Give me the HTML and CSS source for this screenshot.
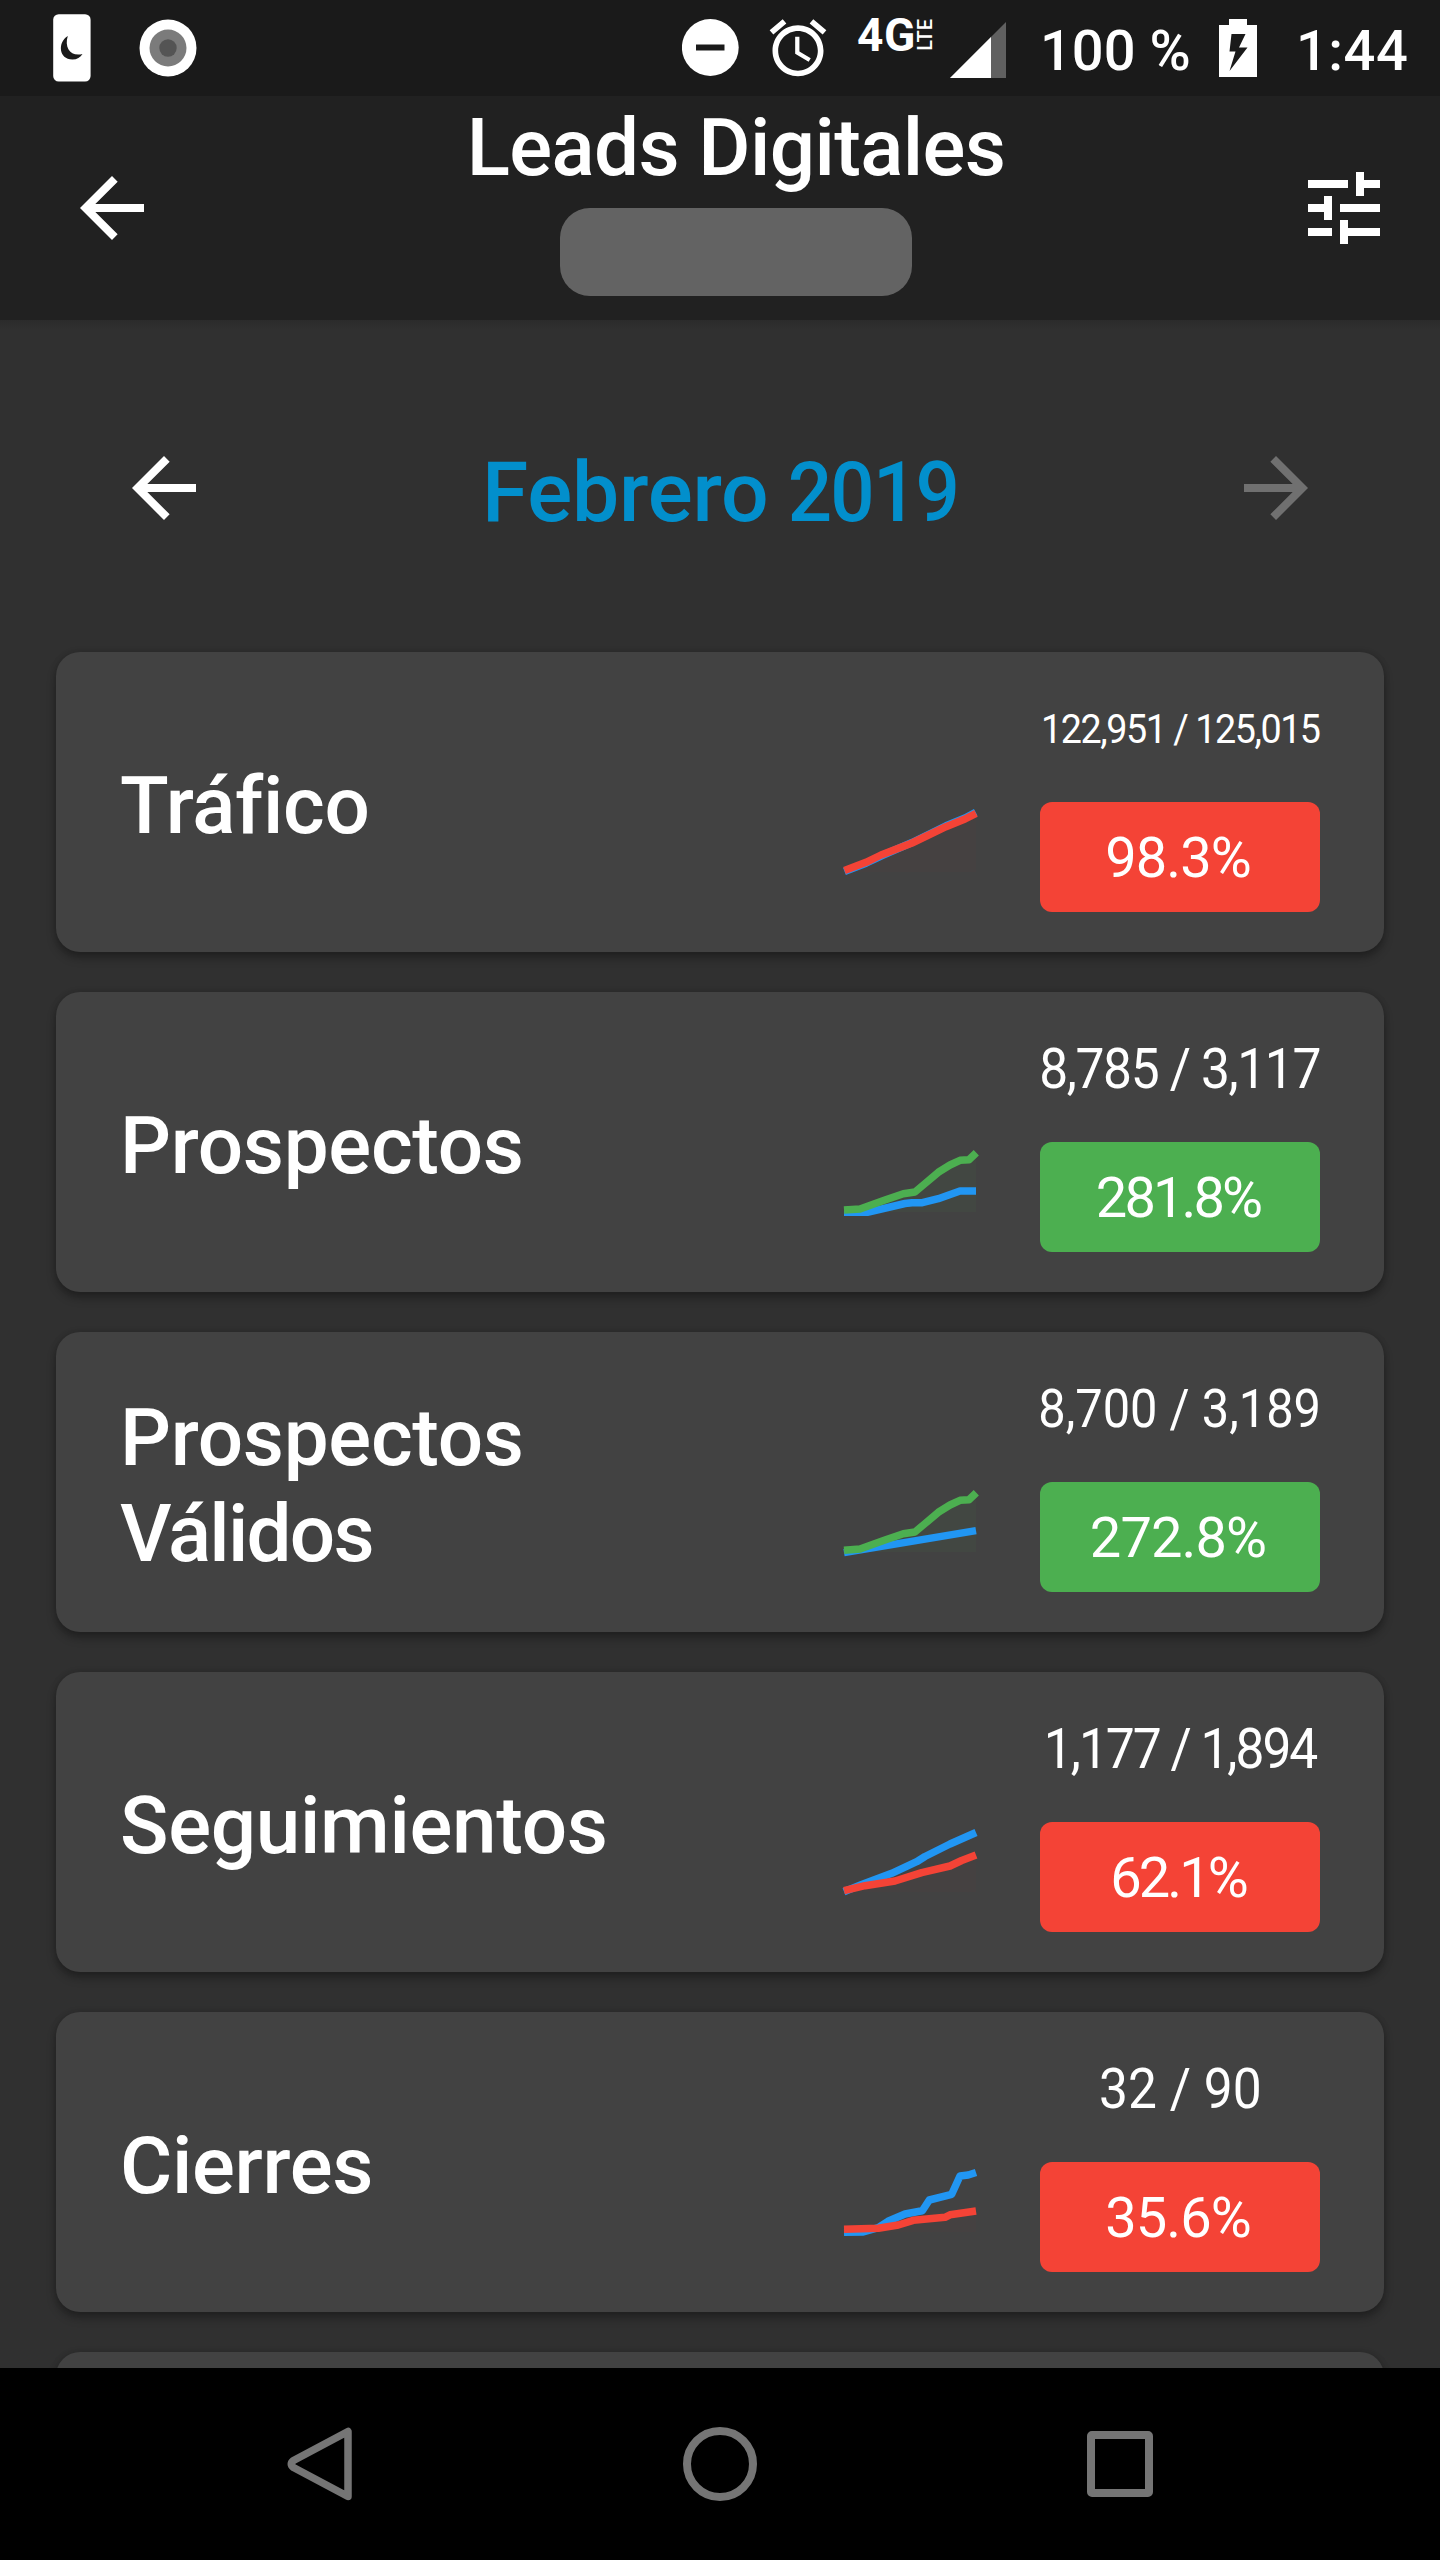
FILE: index.html
```html
<!DOCTYPE html>
<html lang="es">
<head>
<meta charset="utf-8">
<title>Leads Digitales</title>
<link rel="stylesheet" href="styles.css">
</head>
<body>
<div class="phone">
  <div class="status">
    <svg class="status-dim" width="38" height="68" viewBox="0 0 38 68"><rect x=".2" y=".2" width="37.4" height="67.4" rx="5.500" fill="#fff"/><path d="M14.800 22C4.500 28 5.500 45.500 19.500 45.500c4.500 0 8-2 10-5.500C18 43 11 34 14.800 22z" fill="#1a1a1a"/></svg>
    <svg class="status-dot" width="58" height="58" viewBox="0 0 58 58"><circle cx="29" cy="29" r="28.500" fill="#fff"/><circle cx="29" cy="29" r="18.500" fill="#7b7b7b"/><circle cx="29" cy="29" r="8.700" fill="#545454"/></svg>
    <div class="status-right">
      <svg width="57" height="57" viewBox="0 0 57 57"><circle cx="28.300" cy="28.500" r="28.400" fill="#fff"/><path d="M14 25.500h28.500v6H14z" fill="#1a1a1a"/></svg>
      <svg class="alarm" width="68" height="68" viewBox="0 0 24 24"><path fill="#fff" d="M22 5.720l-4.600-3.860-1.290 1.530 4.600 3.860L22 5.720zM7.880 3.390L6.600 1.860 2 5.710l1.290 1.530 4.590-3.850zM12.500 8H11v6l4.750 2.850.75-1.230-4-2.370V8zM12 4c-4.970 0-9 4.030-9 9s4.020 9 9 9c4.970 0 9-4.030 9-9s-4.030-9-9-9zm0 16c-3.870 0-7-3.130-7-7s3.130-7 7-7 7 3.130 7 7-3.130 7-7 7z"/></svg>
      <div class="network"><span class="network-gen">4G</span><span class="network-lte">LTE</span></div>
      <svg class="signal" width="56" height="56" viewBox="0 0 56 56"><path d="M0 56L56 0V56z" fill="#606060"/><path d="M0 56L41 15V56z" fill="#fff"/></svg>
      <span class="status-text percent">100 %</span>
      <svg class="battery" width="38" height="58" viewBox="0 0 38 58"><path d="M10 0h18v6h10v52H0V6h10z" fill="#fff"/><path d="M12.500 15H26.500L20 28.500h8.500L10.500 52 16.500 32.500H10.500z" fill="#1a1a1a"/></svg>
      <span class="status-text clock">1:44</span>
    </div>
  </div>

  <header class="appbar">
    <svg class="icon" viewBox="0 0 24 24"><path fill="#fff" d="M20 11H7.830l5.590-5.590L12 4l-8 8 8 8 1.410-1.410L7.830 13H20v-2z"/></svg>
    <div class="appbar-center">
      <h1 class="appbar-title">Leads Digitales</h1>
      <div class="pill"></div>
    </div>
    <svg class="icon" viewBox="0 0 24 24"><path fill="#fff" d="M3 17v2h6v-2H3zM3 5v2h10V5H3zm10 16v-2h8v-2h-8v-2h-2v6h2zM7 9v2H3v2h4v2h2V9H7zm14 4v-2H11v2h10zm-6-4h2V7h4V5h-4V3h-2v6z"/></svg>
  </header>

  <main class="content">
    <div class="month">
      <svg class="icon" viewBox="0 0 24 24"><path fill="#fff" d="M20 11H7.830l5.590-5.590L12 4l-8 8 8 8 1.410-1.410L7.830 13H20v-2z"/></svg>
      <h2 class="month-label">Febrero <span class="year">2019</span></h2>
      <svg class="icon" viewBox="0 0 24 24"><path fill="#707070" d="M12 4l-1.410 1.410L16.170 11H4v2h12.170l-5.580 5.590L12 20l8-8z"/></svg>
    </div>

    <section class="card">
      <h3 class="card-title">Tráfico</h3>
      <svg class="spark" viewBox="0 0 160 100"><path class="area-red" d="M14 80L36 71 51 63 82 51 116 35 146 21V80z"/><path class="line blue" d="M14.500 79.600L36 71.200 51 64 82 50.500 116 33.800 135 26 145.700 20.300"/><path class="line red" d="M14.500 78.600L36 70.300 51 63 82 51 116 34.700 135 27 146 21.300"/></svg>
      <div class="values"><span class="ratio ratio-small">122,951 / 125,015</span><span class="badge bad">98.3%</span></div>
    </section>

    <section class="card">
      <h3 class="card-title">Prospectos</h3>
      <svg class="spark" viewBox="0 0 160 100"><path class="area-green" d="M14 80L38 74 85 60 108 40 146 21V80z"/><path class="line blue" d="M14 80.300H37.300L75 71.500 82 70.700H92.300L108.300 66.700 130 59H146"/><path class="line green" d="M14 78L30 77 38.300 74 55 68 73.300 61.700 85 60 93.300 53 108.300 40.300 120 33 130 28.300 139 27.700 146.300 20.700"/></svg>
      <div class="values"><span class="ratio ratio-tight">8,785 / 3,117</span><span class="badge good badge-tight">281.8%</span></div>
    </section>

    <section class="card">
      <h3 class="card-title">Prospectos <span class="narrow">Válidos</span></h3>
      <svg class="spark" viewBox="0 0 160 100"><path class="area-green" d="M14 80L38 74 85 60 108 40 146 21V80z"/><path class="line blue" d="M14 80.600L146 58.600"/><path class="line green" d="M14 78.300L30 77 38.300 74 55 68 73.300 61.700 85 60 93.300 53 108.300 40.300 120 33 130 28.300 139 27.700 146.300 20.700"/></svg>
      <div class="values"><span class="ratio ratio-medium">8,700 / 3,189</span><span class="badge good">272.8%</span></div>
    </section>

    <section class="card">
      <h3 class="card-title">Seguimientos</h3>
      <svg class="spark" viewBox="0 0 160 100"><path class="area-red" d="M14 80L65 69 120 54 146 43V80z"/><path class="line blue" d="M14 79.700L31.700 72.500 61.700 61.300 86.700 49.700 95 44.500 120 32 146 20.500"/><path class="line red" d="M14 78.700L35 73.700 65 69 91.700 60.700 120 54 131.700 48.500 146 42.900"/></svg>
      <div class="values"><span class="ratio ratio-tighter">1,177 / 1,894</span><span class="badge bad badge-tight">62.1%</span></div>
    </section>

    <section class="card">
      <h3 class="card-title">Cierres</h3>
      <svg class="spark" viewBox="0 0 160 100"><path class="area-red" d="M14 80L68 73 115 65 146 59V80z"/><path class="line blue" d="M14 80.300L33.300 80 48.300 75.700 58 69.300 75 62 92.300 58.700 99.300 48 121.700 42.300 130 24 138.300 23 146 20.500"/><path class="line red" d="M14 77.300L48.300 76.300 68.300 73 83.300 68.300 115 65.300 120 62.800 146 59"/></svg>
      <div class="values"><span class="ratio">32 / 90</span><span class="badge bad">35.6%</span></div>
    </section>

    <section class="card"></section>
  </main>

  <nav class="navbar">
    <svg width="80" height="80" viewBox="0 0 80 80"><path d="M68 7.500V72.500L13.500 43.500Q9 40 13.500 36.500z" fill="none" stroke="#757575" stroke-width="7.500" stroke-linejoin="round"/></svg>
    <svg width="80" height="80" viewBox="0 0 80 80"><circle cx="40" cy="40" r="33" fill="none" stroke="#757575" stroke-width="8"/></svg>
    <svg width="80" height="80" viewBox="0 0 80 80"><rect x="11" y="11" width="58" height="58" rx="1" fill="none" stroke="#757575" stroke-width="8" stroke-linejoin="round"/></svg>
  </nav>
</div>
</body>
</html>
```
FILE: styles.css
```css
* { box-sizing: border-box; }

body { margin: 0; background: #303030; font-family: Roboto, "Liberation Sans", sans-serif; color: #fff; }

h1, h2, h3 { margin: 0; font-weight: 500; }

svg { display: block; flex: none; }

.phone { width: 1440px; height: 2560px; display: flex; flex-direction: column; overflow: hidden; }

/* Status bar */
.status { height: 96px; flex: none; display: flex; align-items: flex-start; background: #1a1a1a; padding: 0 30px 0 53px; }
.status-dim { margin-top: 14px; }
.status-dot { margin: 19px 0 0 48px; }
.status-right { margin-left: auto; display: flex; align-items: flex-start; padding-top: 19px; }
.alarm { margin: -5px 0 0 25px; }
.network { width: 76px; height: 32px; margin-left: 25px; display: flex; align-items: center; }
.network-gen { width: 58px; flex: none; font-size: 46px; line-height: 32px; font-weight: 700; letter-spacing: .5px; }
.network-lte { font-size: 20px; line-height: 20px; font-weight: 500; writing-mode: vertical-rl; transform: rotate(180deg); }
.signal { margin: 3px 0 0 17px; }
.status-text { font-size: 56px; line-height: 64px; font-weight: 500; white-space: nowrap; }
.percent { width: 151px; margin-left: 34px; }
.battery { margin-left: 28px; }
.clock { width: 114px; margin-left: 39px; letter-spacing: .5px; }

/* App bar */
.appbar { height: 224px; flex: none; display: flex; align-items: center; background: #212121; padding: 0 48px 0 64px; }
.icon { width: 96px; height: 96px; }
.appbar-center { flex: 1; align-self: stretch; padding: 4px 0 0 16px; display: flex; flex-direction: column; align-items: center; gap: 12px; }
.appbar-title { font-size: 80px; line-height: 96px; letter-spacing: -.62px; }
.pill { width: 352px; height: 88px; border-radius: 30px; background: #636363; }

/* Month selector and cards */
.content { flex: 1; min-height: 0; overflow: hidden; padding: 0 56px; background: linear-gradient(#2b2b2b, #303030 10px); }
.month { display: flex; align-items: center; justify-content: space-between; padding: 120px 60px 116px; }
.month-label { height: 96px; padding-top: 5px; font-size: 84px; line-height: 96px; letter-spacing: -.2px; word-spacing: -14px; color: #028fcc; }
.year { display: inline-block; letter-spacing: -2px; transform: scaleX(.93); transform-origin: right; }
.card { height: 300px; margin-bottom: 40px; padding: 0 64px; display: flex; background: #424242; border-radius: 24px; box-shadow: 0 6px 10px rgba(0, 0, 0, .3), 0 0 6px rgba(0, 0, 0, .15); }
.card-title { align-self: center; max-width: 560px; padding-top: 8px; font-size: 80px; line-height: 96px; letter-spacing: -.3px; }
.narrow { letter-spacing: -1.800px; }

.spark { width: 160px; height: 100px; margin: 140px 50px 0 auto; }
.line { fill: none; stroke-width: 7.500; stroke-linejoin: round; }
.blue { stroke: #2196f3; }
.red { stroke: #f44336; }
.green { stroke: #4caf50; }
.area-red { fill: #f44336; opacity: .02; }
.area-green { fill: #4caf50; opacity: .05; }

.values { width: 280px; padding-top: 45px; display: flex; flex-direction: column; align-items: center; }
.ratio { height: 64px; margin-bottom: 41px; font-size: 56px; line-height: 64px; font-weight: 400; white-space: nowrap; transform: scaleX(.92); }
.ratio-small { font-size: 41px; letter-spacing: -1.600px; }
.ratio-tight { letter-spacing: -1.500px; }
.ratio-medium { font-size: 53px; }
.ratio-tighter { letter-spacing: -2.200px; }
.badge { width: 280px; height: 110px; padding: 4px 4px 0 0; border-radius: 12px; font-size: 56px; line-height: 104px; font-weight: 400; letter-spacing: -.9px; text-align: center; }
.badge-tight { letter-spacing: -2.900px; }
.bad { background: #f44336; }
.good { background: #4caf50; }

/* System navigation */
.navbar { height: 192px; flex: none; display: flex; align-items: center; justify-content: space-between; background: #000; padding: 0 280px; }
```
